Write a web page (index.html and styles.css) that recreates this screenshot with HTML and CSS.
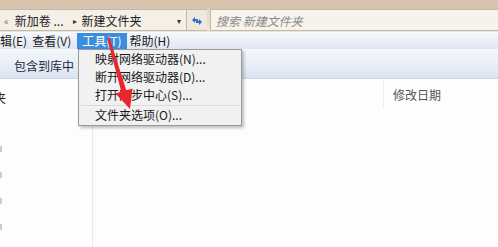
FILE: index.html
```html
<!DOCTYPE html>
<html lang="zh-CN">
<head>
  <meta charset="UTF-8" />
  <title>新建文件夹</title>
  <link rel="stylesheet" href="styles.css">
</head>
<body>
  <div class="window">
    <div class="title-strip"></div>

    <div class="address-row">
      <div class="address-box">
        <span class="crumb-more">&laquo;</span>
        <span class="crumb">新加卷 ...</span>
        <span class="crumb-sep">&#9656;</span>
        <span class="crumb">新建文件夹</span>
        <span class="drop">&#9662;</span>
      </div>
      <div class="refresh">
        <svg width="14" height="12" viewBox="0 0 14 12">
          <path d="M2 6 L5 3 L5 5 L8 5 L8 7 L5 7 L5 9 Z" fill="#2f6fc4"/>
          <path d="M12 6 L9 3 L9 5 L6 5 L6 7 L9 7 L9 9 Z" fill="#2f6fc4" transform="translate(0 2)"/>
        </svg>
      </div>
      <div class="search-box">搜索 新建文件夹</div>
    </div>

    <div class="menu-bar">
      <span class="menu-item">辑(E)</span>
      <span class="menu-item">查看(V)</span>
      <span class="menu-item open">工具(T)</span>
      <span class="menu-item">帮助(H)</span>
    </div>

    <div class="toolbar">
      <span class="tool">包含到库中</span>
    </div>

    <div class="content">
      <div class="nav-pane">
        <div class="nav-label">夹</div>
        <div class="nav-faint">
          <span></span><span></span><span></span><span></span>
        </div>
      </div>
      <div class="file-pane">
        <div class="col-head">
          <span class="col-name"></span>
          <span class="col-date">修改日期</span>
        </div>
      </div>
    </div>

    <div class="dropdown">
      <div class="dd-item">映射网络驱动器(N)...</div>
      <div class="dd-item">断开网络驱动器(D)...</div>
      <div class="dd-item">打开同步中心(S)...</div>
      <div class="dd-sep"></div>
      <div class="dd-item">文件夹选项(O)...</div>
    </div>

    <svg class="arrow" width="60" height="90" viewBox="0 0 60 90">
      <path d="M8 2 L10.5 1.5 L27.5 55 L22.5 56.5 Z" fill="#e8262b"/>
      <path d="M16.5 57.5 L33.5 52.5 L31 73 Z" fill="#e8262b"/>
    </svg>
  </div>
</body>
</html>
```

FILE: styles.css
```css
body {
  margin: 0;
  font-family: "Noto Sans CJK SC", "Noto Sans", sans-serif;
  font-size: 12px;
  color: #1e1e1e;
}

.window {
  position: relative;
  width: 498px;
  height: 247px;
  overflow: hidden;
  background: #fdfdfd;
}

.title-strip {
  height: 9px;
  background: #d9c5ad;
}

.address-row {
  display: flex;
  height: 22px;
  padding-bottom: 1px;
  background: linear-gradient(#e4d8c8, #ece4d8);
}

.address-box {
  display: flex;
  align-items: center;
  width: 187px;
  background: #f4efe7;
  border: 1px solid #c4b8a6;
  border-left: none;
  box-sizing: border-box;
  color: #222;
}

.crumb-more {
  color: #777;
  font-size: 10px;
  margin: 0 6px 0 4px;
}

.crumb-sep {
  font-size: 8px;
  color: #333;
  margin: 0 5px 0 9px;
}

.drop {
  margin-left: auto;
  margin-right: 5px;
  font-size: 8px;
  color: #333;
}

.refresh {
  width: 20px;
  display: flex;
  align-items: center;
  justify-content: center;
  background: #efe8dd;
  border-top: 1px solid #c4b8a6;
  border-bottom: 1px solid #c4b8a6;
  box-sizing: border-box;
}

.search-box {
  flex: 1;
  margin-left: 3px;
  padding-left: 5px;
  display: flex;
  align-items: center;
  background: #f6f2ec;
  border: 1px solid #c4b8a6;
  border-right: none;
  box-sizing: border-box;
  color: #8a8a8a;
  font-style: italic;
}

.menu-bar {
  display: flex;
  gap: 5px;
  height: 16px;
  align-items: center;
  background: linear-gradient(#f4f6fa, #e0e7f1);
  border-top: 1px solid #fbfbfd;
}

.menu-item {
  line-height: 16px;
  color: #1a1a1a;
}

.menu-item.open {
  background: #3b8de0;
  color: #fff;
  padding: 0 5px;
  margin-left: 1px;
  margin-right: -2px;
}

.toolbar {
  height: 29px;
  display: flex;
  align-items: center;
  padding-left: 14px;
  background: linear-gradient(#f5f8fc, #e6edf6 60%, #dae3f0);
  border-bottom: 1px solid #cbd6e6;
}

.tool {
  color: #1c2a3e;
  margin-top: 3px;
}

.content {
  display: flex;
  height: 170px;
}

.nav-pane {
  width: 92px;
  border-right: 1px solid #eaeaea;
  background: #fdfdfd;
}

.nav-label {
  margin-top: 10px;
  margin-left: -6px;
  color: #222;
}

.nav-faint {
  display: flex;
  flex-direction: column;
  gap: 20px;
  margin-top: 40px;
}

.nav-faint span {
  width: 2px;
  height: 6px;
  background: #c8ccd2;
}

.file-pane {
  flex: 1;
}

.col-head {
  display: flex;
  height: 30px;
  align-items: center;
}

.col-name {
  width: 290px;
  height: 30px;
  border-right: 1px solid #f0f0f0;
}

.col-date {
  margin-left: 9px;
  color: #555;
}

.dropdown {
  position: absolute;
  left: 78px;
  top: 49px;
  width: 164px;
  padding: 0 0 1px;
  background: #f1f1f1;
  border: 1px solid #9a9a9a;
  box-sizing: border-box;
  box-shadow: 2px 2px 3px rgba(0, 0, 0, 0.25);
}

.dd-item {
  height: 18px;
  line-height: 18px;
  padding-left: 16px;
  color: #1a1a1a;
}

.dd-sep {
  height: 1px;
  margin: 1px 2px 0 2px;
  background: #dcdcdc;
}

.arrow {
  position: absolute;
  left: 99px;
  top: 36px;
}
```
